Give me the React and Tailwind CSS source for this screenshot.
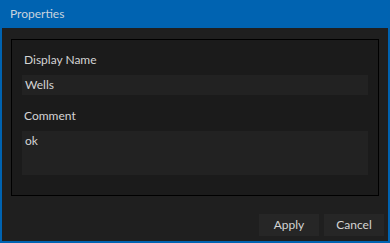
export default function App() {
  return (
    <div
      className="w-[390px] h-[243px] bg-[#0063b1] flex flex-col text-[12px] text-[#d4d4d4]"
      style={{ fontFamily: 'Lato, "Liberation Sans", sans-serif' }}
    >
      <div className="h-[28px] shrink-0 flex items-center pl-[10px] pb-[1px] text-[#c9d3de]">Properties</div>

      <div className="flex-1 mx-[2px] mb-[2px] bg-[#1f1f1f] flex flex-col pt-[11px] px-[9px]">
        <div className="h-[157px] border border-black bg-[#1b1b1b] px-[10px] pt-[12px] flex flex-col">
          <div className="h-[16px] leading-[16px] pl-[2px]">Display Name</div>
          <div className="mt-[7px] h-[20px] bg-[#222222] flex items-center pl-[3px] leading-[16px]">Wells</div>
          <div className="mt-[13px] h-[16px] leading-[16px] pl-[2px]">Comment</div>
          <div className="mt-[7px] h-[44px] bg-[#222222] pl-[3px] pt-[2px] leading-[16px]">ok</div>
        </div>

        <div className="flex justify-end gap-[5px] mt-[18px] -mr-[5px]">
          <button className="w-[60px] h-[22px] bg-[#262626] leading-[16px]">Apply</button>
          <button className="w-[60px] h-[22px] bg-[#262626] leading-[16px]">Cancel</button>
        </div>
      </div>
    </div>
  );
}
